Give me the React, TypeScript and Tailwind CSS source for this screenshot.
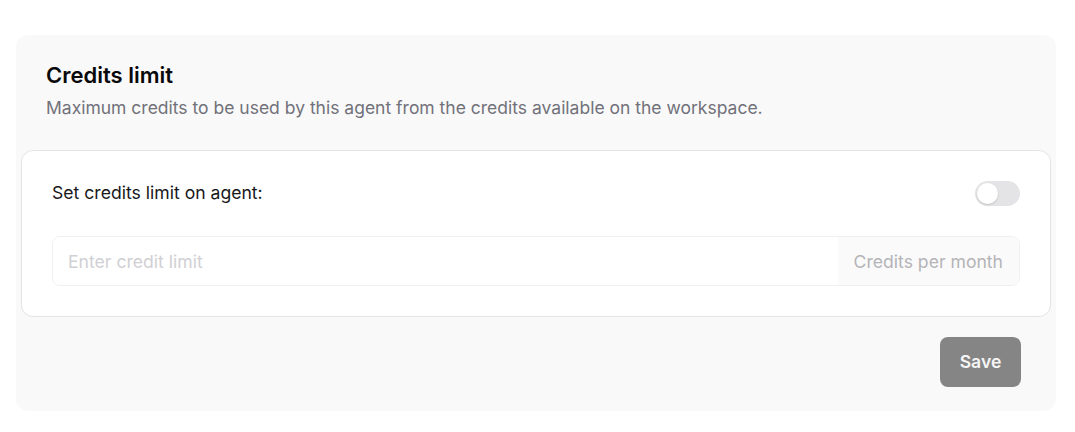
import React from "react";

export default function App() {
  return (
    <div className="w-[1075px] h-[432px] bg-white pt-[35px] pl-[16px] font-['Inter',sans-serif]">
      <div className="w-[1040px] h-[376px] rounded-[12px] bg-[#f9f9f9] flex flex-col">
        <div className="pt-[25px] px-[30px]">
          <h2 className="text-[22px] leading-[30px] font-semibold text-[#09090b]">Credits limit</h2>
          <p className="mt-[5px] text-[17.5px] leading-[26px] text-[#71717a]">
            Maximum credits to be used by this agent from the credits available on the workspace.
          </p>
        </div>
        <div className="mx-[5px] mt-[29px] rounded-[12px] border border-[#e4e4e7] bg-white p-[30px]">
          <div className="flex items-center justify-between h-[25px]">
            <span className="text-[17.6px] font-normal text-[#18181b]">Set credits limit on agent:</span>
            <button className="relative w-[45px] h-[25px] rounded-full bg-[#e4e4e7]">
              <span className="absolute left-[2px] top-[2px] w-[21px] h-[21px] rounded-full bg-white shadow-[0_1px_2px_rgba(0,0,0,0.15)]" />
            </button>
          </div>
          <div className="mt-[30px] flex h-[50px] rounded-[8px] border border-[#f0f0f0] overflow-hidden">
            <input
              className="flex-1 min-w-0 px-[15px] pt-[2px] text-[17.6px] outline-none placeholder:text-[#d0d0d4] bg-white"
              placeholder="Enter credit limit"
            />
            <div className="flex items-center px-[16px] pt-[2px] bg-[#fafafa] text-[17.6px] text-[#b4b4b8]">
              Credits per month
            </div>
          </div>
        </div>
        <div className="flex justify-end pr-[35px] mt-[20px]">
          <button className="w-[81px] h-[50px] rounded-[8px] bg-[#858585] text-[17.6px] font-semibold text-[#f5f5f5]">
            Save
          </button>
        </div>
      </div>
    </div>
  );
}
